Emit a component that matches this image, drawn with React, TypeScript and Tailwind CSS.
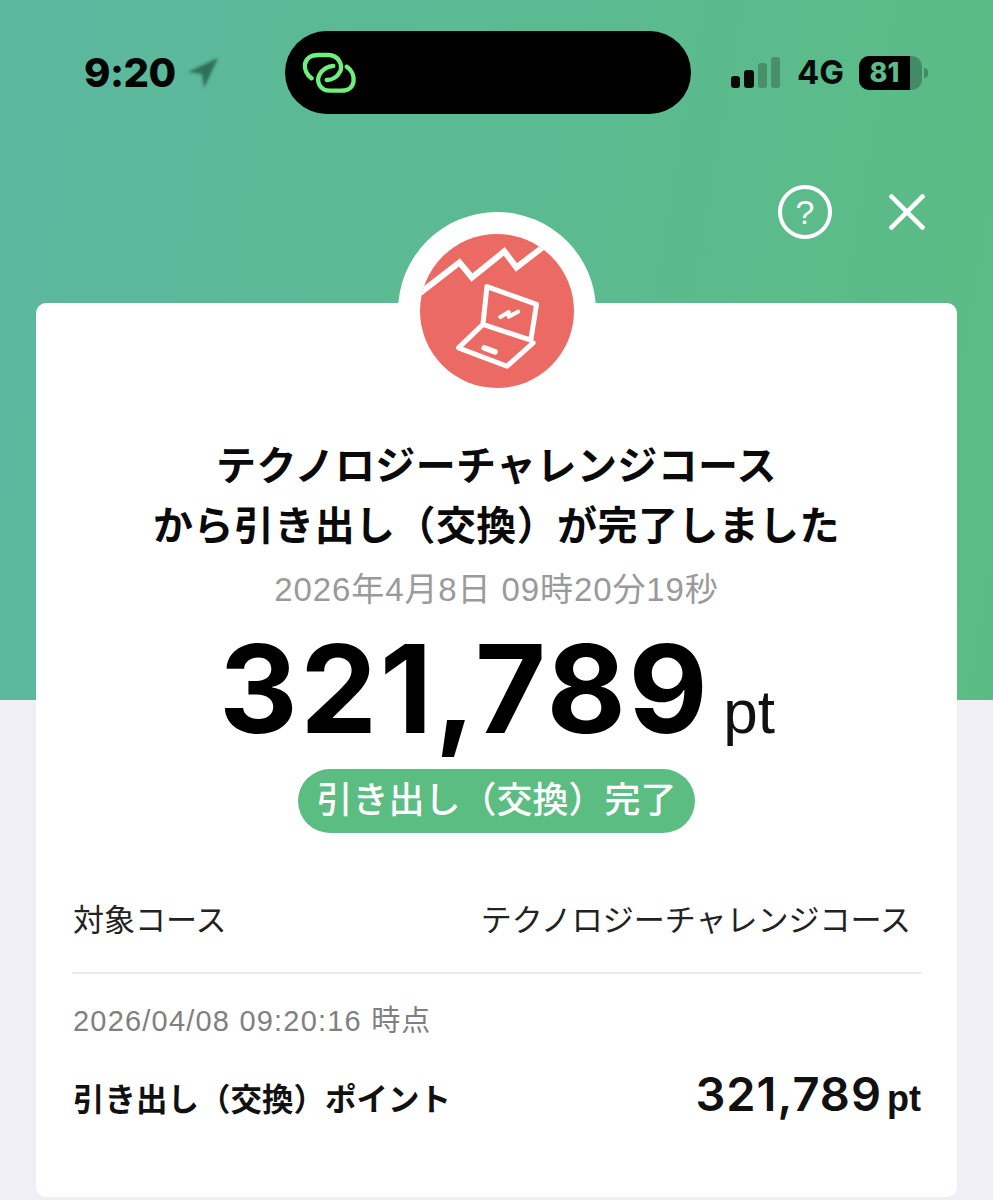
const SANS = 'font-["Liberation_Sans","Noto_Sans_CJK_JP",sans-serif]'

function StatusBar() {
  return (
    <div className="flex h-[83px] items-center pl-[84px] pr-[65px]">
      <div className="flex w-[201px] items-center">
        <span className='font-["Inter",sans-serif] text-[40px] font-extrabold leading-none text-[#050505] tracking-[-0.5px]'>
          9:20
        </span>
        <svg width="31" height="32" viewBox="0 0 31 32" className="ml-[12px] blur-[1.5px]">
          <path d="M30 1 L0 15 L14 17 L16 31 Z" fill="#2f6f5a" />
        </svg>
      </div>
      <div className="flex h-[83px] w-[406px] items-center rounded-[42px] bg-black pl-[15px]">
        <svg width="60" height="45" viewBox="900 150 180 135" fill="none" stroke="#6ef07f" strokeWidth="13" strokeLinecap="round">
          <path d="M935 235 C905 215 905 165 955 165 L985 165 C1015 165 1030 195 1020 215 C1012 232 995 240 980 240" />
          <path d="M1040 200 C1070 220 1070 272 1025 272 L990 272 C960 272 948 245 958 225 C966 208 985 198 1000 198" />
        </svg>
      </div>
      <div className="ml-[40px] flex items-end gap-[4px]">
        <div className="h-[12px] w-[9px] rounded-[3px] bg-[#0a0a0a]" />
        <div className="h-[18px] w-[10px] rounded-[3px] bg-[#0a0a0a]" />
        <div className="h-[25px] w-[9px] rounded-[3px] bg-[#479069]" />
        <div className="h-[31px] w-[9px] rounded-[3px] bg-[#479069]" />
      </div>
      <span className='ml-[17px] font-["Inter",sans-serif] text-[33px] font-bold leading-none text-[#0a0a0a]'>4G</span>
      <div className="ml-[15px] flex items-center">
        <div className="flex h-[34px] w-[63px] overflow-hidden rounded-[10px] bg-[#438a66]">
          <div className='flex w-[51px] items-center justify-center bg-black font-["Inter",sans-serif] text-[27px] font-extrabold leading-none text-[#5dbb87]'>
            81
          </div>
        </div>
        <div className="ml-[2px] h-[10px] w-[4px] rounded-r-full bg-[#438a66]" />
      </div>
    </div>
  )
}

function CourseBadge() {
  return (
    <div className="mx-auto -mt-[91px] flex h-[198px] w-[198px] items-center justify-center rounded-full bg-white">
      <svg width="154" height="154" viewBox="120 105 460 460">
        <defs>
          <clipPath id="course-circle">
            <circle cx="350" cy="335" r="230" />
          </clipPath>
        </defs>
        <circle cx="350" cy="335" r="230" fill="#ec6a64" />
        <g clipPath="url(#course-circle)" fill="none" stroke="#fff" strokeWidth="18">
          <path d="M115 285 L238 190 L275 235 L372 157 L408 205 L495 138" />
          <g strokeLinejoin="round" strokeLinecap="round" strokeWidth="15">
            <path d="M320 262 L468 315 L451 422 L308 375 Z" />
            <path d="M308 375 L235 445 L380 500 L458 430" />
            <path d="M312 445 L344 457" strokeWidth="17" />
            <path d="M360 353 L385 338 L385 352 L413 337" strokeWidth="12" />
          </g>
        </g>
      </svg>
    </div>
  )
}

export default function App() {
  return (
    <div
      className={`h-[1200px] overflow-hidden bg-[#efeff5] bg-[linear-gradient(100deg,#5cb8a0_0%,#5bbc83_100%)] bg-[length:100%_700px] bg-no-repeat pt-[31px] ${SANS}`}
    >
      <StatusBar />

      <div className="mt-[71px] flex items-center justify-end gap-[57px] pr-[68px]">
        <div className="flex h-[54px] w-[54px] items-center justify-center rounded-full border-[4px] border-white text-[34px] font-light leading-none text-white">
          ?
        </div>
        <svg width="36" height="36" viewBox="0 0 36 36" stroke="#fff" strokeWidth="4.5">
          <path d="M1 1 L35 35 M35 1 L1 35" />
        </svg>
      </div>

      <div className="mx-[36px] mt-[64px] flex h-[894px] flex-col rounded-[10px] bg-white">
        <CourseBadge />

        <h1 className="mt-[26px] text-center text-[40px] font-bold leading-[60px] tracking-[0.4px] text-[#0a0a0a]">
          テクノロジーチャレンジコース
          <br />
          から引き出し（交換）が完了しました
        </h1>
        <p className="mt-[14px] text-center text-[33px] leading-[40px] tracking-[0.9px] text-[#9a9a9a]">
          2026年4月8日 09時20分19秒
        </p>

        <div className="mt-[11px] flex items-baseline justify-center pl-[1px]">
          <span className='font-["Inter",sans-serif] text-[122px] font-[650] leading-[136px] tracking-[2.5px] text-black'>321,789</span>
          <span className="ml-[13px] text-[62px] leading-none text-[#111]">pt</span>
        </div>

        <div className="mt-[12px] flex justify-center">
          <span className="flex h-[64px] w-[397px] items-center justify-center rounded-full bg-[#5bbd82] text-[36px] font-medium text-white">
            引き出し（交換）完了
          </span>
        </div>

        <div className="mx-[36px] mt-[66px]">
          <div className="flex items-center justify-between border-b-2 border-[#e9e9ec] pb-[29px] pl-[1px] pr-[10px] text-[31px] leading-[44px] text-[#222]">
            <span>対象コース</span>
            <span>テクノロジーチャレンジコース</span>
          </div>
          <p className="mt-[27px] pl-[1px] text-[29px] leading-[40px] tracking-[1.2px] text-[#808080]">
            2026/04/08 09:20:16 時点
          </p>
          <div className="mt-[29px] flex items-baseline justify-between pl-[1px]">
            <span className="text-[31.5px] font-bold leading-[44px] text-[#111]">引き出し（交換）ポイント</span>
            <span className="font-bold leading-none text-[#111]">
              <span className='font-["Inter",sans-serif] text-[47px] font-semibold tracking-[1px]'>321,789</span>
              <span className="ml-[5px] text-[36px]">pt</span>
            </span>
          </div>
        </div>
      </div>
    </div>
  )
}
